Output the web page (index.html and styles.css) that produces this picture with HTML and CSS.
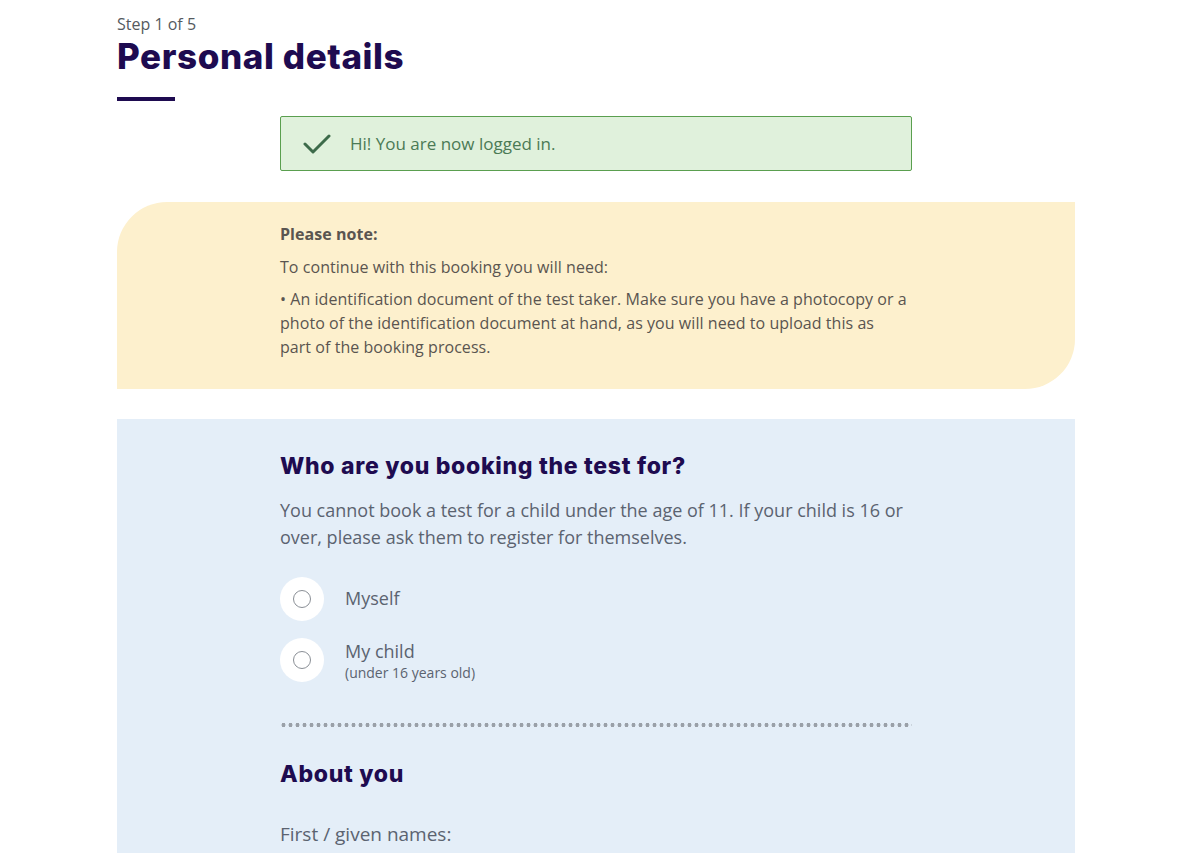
FILE: index.html
```html
<!DOCTYPE html>
<html lang="en">
<head>
    <meta charset="UTF-8">
    <meta name="viewport" content="width=device-width, initial-scale=1.0">
    <title>Personal details</title>
    <link rel="stylesheet" href="styles.css">
</head>
<body>
    <div class="page">
        <div class="step">Step 1 of 5</div>
        <h1 class="title">Personal details</h1>
        <div class="title-bar"></div>

        <div class="inner">
            <div class="alert-success">
                <svg class="check" width="28" height="22" viewBox="0 0 28 22">
                    <path d="M2 11 L10 19 L26 3" fill="none" stroke="#3d6b4a" stroke-width="3" stroke-linecap="round" stroke-linejoin="round"/>
                </svg>
                <span>Hi! You are now logged in.</span>
            </div>
        </div>

        <div class="note">
            <div class="inner">
                <p class="note-title">Please note:</p>
                <p>To continue with this booking you will need:</p>
                <p>&bull; An identification document of the test taker. Make sure you have a photocopy or a photo of the identification document at hand, as you will need to upload this as part of the booking process.</p>
            </div>
        </div>

        <div class="form-panel">
            <div class="inner">
                <h2>Who are you booking the test for?</h2>
                <p class="intro">You cannot book a test for a child under the age of 11. If your child is 16 or over, please ask them to register for themselves.</p>

                <label class="radio-row">
                    <span class="radio-wrap"><input type="radio" name="who" value="me"></span>
                    <span class="radio-label">Myself</span>
                </label>
                <label class="radio-row">
                    <span class="radio-wrap"><input type="radio" name="who" value="child"></span>
                    <span class="radio-label">My child<small>(under 16 years old)</small></span>
                </label>

                <div class="dots"></div>

                <h2>About you</h2>
                <p class="field-label">First / given names:</p>
            </div>
        </div>
    </div>
</body>
</html>
```

FILE: styles.css
```css
body {
    margin: 0;
    padding: 0;
    font-family: "Open Sans", "Liberation Sans", sans-serif;
    background-color: #ffffff;
    color: #5b6370;
}
.page {
    width: 958px;
    margin-left: 117px;
    padding-top: 13px;
}
.step {
    font-size: 16px;
    line-height: 22px;
    color: #555a60;
}
.title {
    margin: 0;
    font-family: Inter, "Liberation Sans", sans-serif;
    font-weight: 800;
    font-size: 35px;
    line-height: 42px;
    color: #1e0b50;
    letter-spacing: 0.6px;
}
.title-bar {
    width: 58px;
    height: 4px;
    background-color: #1e0b50;
    margin-top: 20px;
}
.inner {
    width: 632px;
    margin-left: 163px;
}
.alert-success {
    margin-top: 15px;
    height: 53px;
    display: flex;
    align-items: center;
    background-color: #e0f1dc;
    border: 1px solid #5a9f4f;
    border-radius: 2px;
    color: #4b7a55;
    font-size: 17px;
}
.check {
    margin-left: 22px;
    margin-right: 19px;
}
.note {
    margin-top: 31px;
    background-color: #fdf0cd;
    border-radius: 50px 0 50px 0;
    padding: 20px 0 30px;
    color: #5a5550;
    font-size: 16px;
    line-height: 24px;
    letter-spacing: 0.05px;
}
.note p {
    margin: 0 0 8px;
    max-width: 628px;
}
.note p:last-child {
    margin-bottom: 0;
}
.note .note-title {
    font-weight: 700;
    margin-bottom: 9px;
}
.form-panel {
    margin-top: 30px;
    background-color: #e4eef8;
    padding: 32px 0 20px;
}
.form-panel h2 {
    margin: 0;
    font-family: Inter, "Liberation Sans", sans-serif;
    font-weight: 800;
    font-size: 23px;
    line-height: 30px;
    letter-spacing: 0.7px;
    color: #1e0b50;
}
.intro {
    margin: 16px 0 26px;
    font-size: 18px;
    line-height: 27px;
}
.radio-row {
    display: flex;
    align-items: flex-start;
    margin-bottom: 17px;
    cursor: pointer;
}
.radio-wrap {
    width: 44px;
    height: 44px;
    border-radius: 50%;
    background-color: #ffffff;
    display: flex;
    align-items: center;
    justify-content: center;
    flex-shrink: 0;
}
.radio-wrap input {
    appearance: none;
    width: 18px;
    height: 18px;
    margin: 0;
    border: 1px solid #8a8f96;
    border-radius: 50%;
    background-color: #ffffff;
}
.radio-label {
    margin-left: 21px;
    font-size: 18px;
    line-height: 24px;
    padding-top: 9px;
    color: #5b6370;
}
.radio-row:nth-of-type(2) .radio-label {
    padding-top: 1px;
}
.radio-label small {
    display: block;
    font-size: 14px;
    line-height: 20px;
}
.dots {
    height: 4px;
    margin: 40px 0 32px;
    background-image: radial-gradient(circle, #9aa0a8 1.8px, transparent 2.2px);
    background-size: 7px 4px;
    background-repeat: repeat-x;
}
.field-label {
    margin: 31px 0 0;
    font-size: 19px;
    line-height: 28px;
}
```
